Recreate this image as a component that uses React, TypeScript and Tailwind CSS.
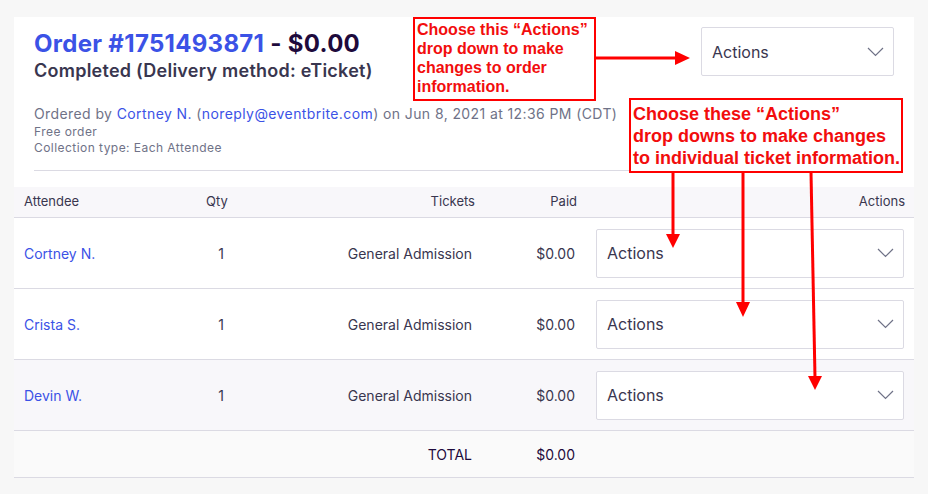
import React from "react";

const BLUE = "text-[#3b52e6]";

function Chevron() {
  return (
    <svg width="17" height="10" viewBox="0 0 17 10" fill="none">
      <polyline points="1,1 8.5,8.5 16,1" stroke="#6f7287" strokeWidth="1.2" />
    </svg>
  );
}

function ActionsSelect({ className = "" }: { className?: string }) {
  return (
    <div
      className={`flex h-[49px] items-center justify-between rounded-[2px] border border-[#dbdae3] bg-white pl-[10px] pr-[9px] text-[16px] text-[#39364f] ${className}`}
    >
      <span>Actions</span>
      <Chevron />
    </div>
  );
}

const attendees = [
  { name: "Cortney N.", bg: "bg-white" },
  { name: "Crista S.", bg: "bg-white" },
  { name: "Devin W.", bg: "bg-[#f8f7fa]" },
];

const cols = "grid grid-cols-[146px_114px_211px_102px_327px]";

export default function App() {
  return (
    <div className="relative h-[494px] w-[928px] overflow-hidden bg-[#f7f7f7] font-['Inter',sans-serif] pt-[17px]">
      {/* order header */}
      <div className="mx-[14px] bg-white px-[20px] pb-[16px]">
        <div className="flex justify-between">
          <div className="pt-[12px]">
            <h1 className="text-[24px] font-bold leading-[30px] tracking-[0.3px] text-[#1e0a3c]">
              <span className={BLUE}>Order #1751493871</span> - $0.00
            </h1>
            <div className="text-[18px] font-semibold leading-[24px] tracking-[0.25px] text-[#39364f]">
              Completed (Delivery method: eTicket)
            </div>
            <div className="mt-[21px] text-[14px] leading-[20px] tracking-[0.4px] text-[#6f7287]">
              Ordered by <span className={BLUE}>Cortney N.</span> (
              <span className={BLUE}>noreply@eventbrite.com</span>) on Jun 8, 2021 at 12:36 PM (CDT)
            </div>
            <div className="text-[12px] leading-[16px] tracking-[0.45px] text-[#6f7287]">Free order</div>
            <div className="text-[12px] leading-[16px] tracking-[0.45px] text-[#6f7287]">
              Collection type: Each Attendee
            </div>
          </div>
          <ActionsSelect className="mt-[10px] w-[193px]" />
        </div>
        <div className="mt-[14px] border-t border-[#dbdae3]" />
      </div>

      {/* attendees table */}
      <div className="mx-[14px] text-[#39364f]">
        <div className={`${cols} h-[31px] items-center border-b border-[#dbdae3] bg-[#f8f7fa] text-[13px]`}>
          <div className="pl-[10px]">Attendee</div>
          <div className="text-center">Qty</div>
          <div className="pr-[10px] text-right">Tickets</div>
          <div className="pr-[10px] text-right">Paid</div>
          <div className="pr-[9px] text-right">Actions</div>
        </div>
        {attendees.map((a) => (
          <div
            key={a.name}
            className={`${cols} h-[71px] items-center border-b border-[#dbdae3] text-[14px] ${a.bg}`}
          >
            <div className={`pl-[10px] ${BLUE}`}>{a.name}</div>
            <div className="pl-[8px] text-center">1</div>
            <div className="pr-[13px] text-right">General Admission</div>
            <div className="pr-[12px] text-right">$0.00</div>
            <div className="pl-[9px] pr-[10px]">
              <ActionsSelect />
            </div>
          </div>
        ))}
        <div className={`${cols} h-[47px] items-center border-b border-[#dbdae3] bg-[#fafafa] text-[14px] text-[#1e0a3c]`}>
          <div />
          <div />
          <div className="pr-[13px] text-right">TOTAL</div>
          <div className="pr-[12px] text-right">$0.00</div>
          <div />
        </div>
      </div>

      {/* annotations */}
      <svg className="pointer-events-none absolute left-0 top-0" width="928" height="494">
        <g stroke="#ff0000" strokeWidth="3">
          <line x1="596" y1="58" x2="677" y2="58" />
          <line x1="673" y1="172" x2="673" y2="236" />
          <line x1="743" y1="172" x2="743" y2="304" />
          <line x1="811" y1="172" x2="815" y2="378" />
        </g>
        <g fill="#ff0000">
          <polygon points="675,51 675,65 690,58" />
          <polygon points="666,234 680,234 673,248" />
          <polygon points="736,302 750,302 743,317" />
          <polygon points="808,376 822,376 815,390" />
        </g>
      </svg>
      <div className="absolute left-[413px] top-[17px] h-[84px] w-[183px] border-2 border-[#ff0000] bg-white pl-[2px] pt-[1px] font-['Liberation_Sans',Arial,sans-serif] text-[16px] font-bold leading-[19px] text-[#f20d0d]">
        <div>Choose this “Actions”</div>
        <div>drop down to make</div>
        <div>changes to order</div>
        <div>information.</div>
      </div>
      <div className="absolute left-[629px] top-[98px] h-[75px] w-[274px] border-2 border-[#ff0000] bg-white pl-[2px] pt-[3px] font-['Liberation_Sans',Arial,sans-serif] text-[18px] font-bold leading-[22px] text-[#f20d0d]">
        <div>Choose these “Actions”</div>
        <div>drop downs to make changes</div>
        <div>to individual ticket information.</div>
      </div>
    </div>
  );
}
